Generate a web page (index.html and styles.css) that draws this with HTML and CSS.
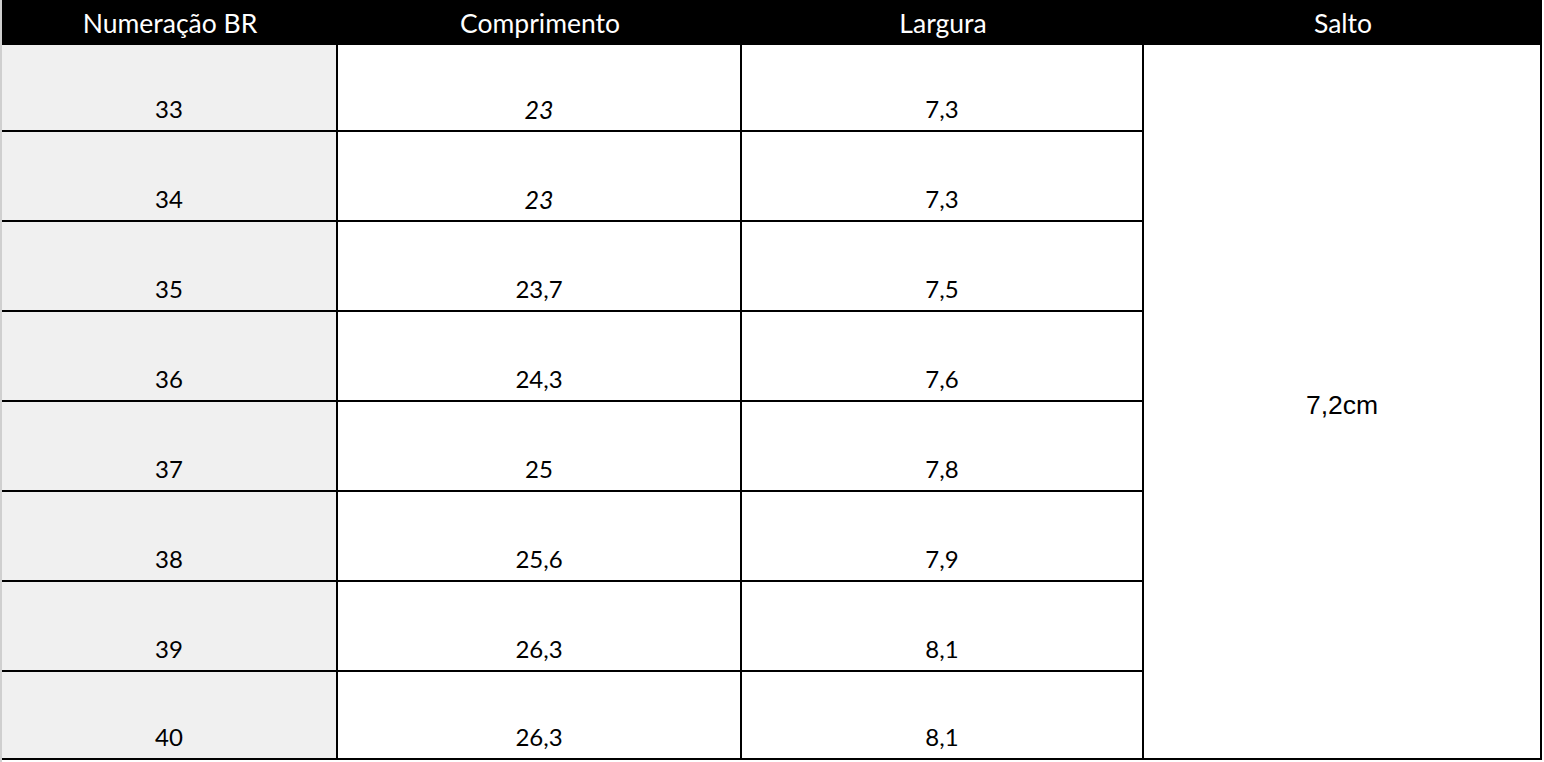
FILE: index.html
```html
<!DOCTYPE html>
<html lang="pt-BR">
<head>
<meta charset="utf-8">
<title>Tabela de medidas</title>
<link rel="stylesheet" href="styles.css">
</head>
<body>
<div class="page">
  <div class="sheet">
    <div class="hcell">Numeração BR</div>
    <div class="hcell">Comprimento</div>
    <div class="hcell">Largura</div>
    <div class="hcell">Salto</div>

    <div class="cell size r1">33</div>
    <div class="cell r1"><i>23</i></div>
    <div class="cell r1">7,3</div>
    <div class="cell heel">7,2cm</div>

    <div class="cell size">34</div>
    <div class="cell"><i>23</i></div>
    <div class="cell">7,3</div>

    <div class="cell size">35</div>
    <div class="cell">23,7</div>
    <div class="cell">7,5</div>

    <div class="cell size">36</div>
    <div class="cell">24,3</div>
    <div class="cell">7,6</div>

    <div class="cell size">37</div>
    <div class="cell">25</div>
    <div class="cell">7,8</div>

    <div class="cell size">38</div>
    <div class="cell">25,6</div>
    <div class="cell">7,9</div>

    <div class="cell size">39</div>
    <div class="cell">26,3</div>
    <div class="cell">8,1</div>

    <div class="cell size r8">40</div>
    <div class="cell r8">26,3</div>
    <div class="cell r8">8,1</div>
  </div>
</div>
</body>
</html>
```

FILE: styles.css
```css
* { box-sizing: border-box; }

html, body {
  margin: 0;
  padding: 0;
  background: #ffffff;
}

.page {
  width: 1544px;
  height: 762px;
  border-left: 2px solid #cfcfcf;
  overflow: hidden;
}

.sheet {
  display: grid;
  grid-template-columns: 336px 404px 402px 398px;
  grid-template-rows: 45px 87px repeat(6, 90px) 88px;
  width: 1540px;
  font-family: "Lato", "Noto Sans", sans-serif;
  font-size: 24px;
  color: #000;
}

.hcell {
  background: #000;
  color: #fff;
  display: flex;
  align-items: center;
  justify-content: center;
  font-size: 26.5px;
  line-height: 26px;
  padding-top: 0;
}

.cell {
  display: flex;
  align-items: flex-end;
  justify-content: center;
  line-height: 24px;
  padding-bottom: 9px;
  background: #fff;
  border-right: 2px solid #000;
  border-bottom: 2px solid #000;
}

.cell.size {
  background: #f0f0f0;
}

.cell i {
  font-style: italic;
  font-size: 25px;
}

.heel {
  grid-column: 4;
  grid-row: 2 / span 8;
  align-items: center;
  padding-bottom: 0;
  padding-top: 6px;
  font-family: "Liberation Sans", Arial, sans-serif;
  font-size: 26.5px;
  line-height: 30px;
}
```
